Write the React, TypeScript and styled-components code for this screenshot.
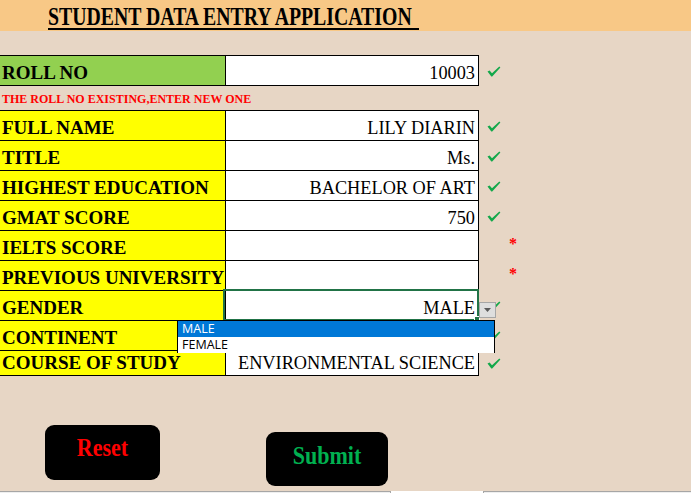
import React from 'react';
import styled, { createGlobalStyle } from 'styled-components';

const Global = createGlobalStyle`
  html, body { margin: 0; padding: 0; }
  body {
    background: #e7d6c5;
    overflow: hidden;
    font-family: "Liberation Serif", "Times New Roman", serif;
  }
`;

const Page = styled.div`
  width: 691px;
  height: 493px;
  display: flex;
  flex-direction: column;
  background: #e7d6c5;
`;

const Header = styled.header`
  flex: none;
  height: 31px;
  box-sizing: border-box;
  padding: 8px 0 0 48px;
  background: #f8c886;
`;

const TitleWrap = styled.h1`
  margin: 0;
  display: inline-block;
  border-bottom: 2px solid #000;
  padding-right: 7px;
`;

const TitleText = styled.span`
  display: block;
  font-size: 19.8px;
  line-height: 20px;
  font-weight: bold;
  color: #000;
  transform: scaleY(1.3);
  transform-origin: 50% 16.8px;
`;

const Sheet = styled.div`
  margin-top: 24px;
  display: flex;
  flex-direction: column;
`;

const Row = styled.div<{ $h: number }>`
  display: grid;
  grid-template-columns: 226px 253px 1fr;
  height: ${(p) => p.$h}px;
  box-sizing: border-box;
`;

const LabelCell = styled.div<{ $bg: string; $top?: boolean }>`
  background: ${(p) => p.$bg};
  border-right: 1px solid #000;
  border-bottom: 1px solid #000;
  border-top: ${(p) => (p.$top ? '1px solid #000' : 'none')};
  display: flex;
  align-items: flex-end;
  padding: 0 0 2px 2px;
  font-size: 19px;
  line-height: 20px;
  font-weight: bold;
  color: #000;
  white-space: nowrap;
  overflow: hidden;
`;

const ValueCell = styled.div<{ $top?: boolean; $selected?: boolean }>`
  position: relative;
  background: #fff;
  border-right: 1px solid #000;
  border-bottom: 1px solid #000;
  border-top: ${(p) => (p.$top ? '1px solid #000' : 'none')};
  display: flex;
  align-items: flex-end;
  justify-content: flex-end;
  padding: 0 3px 2px 0;
  font-size: 18.3px;
  line-height: 20px;
  color: #000;
  white-space: nowrap;
  ${(p) =>
    p.$selected
      ? `
    &::after {
      content: '';
      position: absolute;
      left: -3px;
      right: -1px;
      top: -2px;
      bottom: -1px;
      border: 2px solid #217346;
      pointer-events: none;
    }
  `
      : ''}
`;

const StatusCell = styled.div<{ $top?: boolean }>`
  display: flex;
  align-items: center;
  padding-left: 8px;
  padding-top: ${(p) => (p.$top ? '2px' : '0')};
`;

const Asterisk = styled.span`
  align-self: flex-start;
  margin: 5px 0 0 22px;
  font-size: 16px;
  line-height: 16px;
  font-weight: bold;
  color: #ff0000;
`;

const ErrorLine = styled.div`
  height: 24px;
  display: flex;
  align-items: flex-end;
  padding: 0 0 4px 2px;
  box-sizing: border-box;
  font-size: 12px;
  line-height: 14px;
  font-weight: bold;
  color: #ff0000;
`;

const FillHandle = styled.span`
  position: absolute;
  right: -2px;
  bottom: -2px;
  width: 4px;
  height: 4px;
  background: #217346;
  border: 1px solid #fff;
  z-index: 2;
`;

const DropButton = styled.span`
  position: absolute;
  left: 253px;
  top: 11px;
  width: 17px;
  height: 16px;
  box-sizing: border-box;
  background: #dedede;
  border: 1px solid #a6a6a6;
  display: flex;
  align-items: center;
  justify-content: center;
  z-index: 3;
`;

const DropList = styled.ul`
  position: absolute;
  left: -49px;
  top: 29px;
  width: 318px;
  height: 33px;
  box-sizing: border-box;
  margin: 0;
  padding: 0;
  list-style: none;
  background: #fff;
  border: 1px solid #000;
  z-index: 4;
  text-align: left;
`;

const DropItem = styled.li<{ $active?: boolean }>`
  height: 16px;
  padding-left: 4px;
  background: ${(p) => (p.$active ? '#0078d7' : '#fff')};
  color: ${(p) => (p.$active ? '#fff' : '#000')};
  font-family: "Open Sans", "Noto Sans", sans-serif;
  font-size: 12.5px;
  line-height: 16px;
`;

const ButtonRow = styled.div`
  display: flex;
  align-items: flex-start;
  padding-left: 45px;
  margin-top: 49px;
  gap: 106px;
`;

const ActionButton = styled.button<{ $color: string; $w: number; $h: number; $offset: number; $lift: number }>`
  width: ${(p) => p.$w}px;
  height: ${(p) => p.$h}px;
  margin-top: ${(p) => p.$offset}px;
  background: #000;
  border: none;
  border-radius: 9px;
  color: ${(p) => p.$color};
  font-family: "Liberation Serif", "Times New Roman", serif;
  font-size: 22px;
  font-weight: bold;
  padding: 0 0 ${(p) => p.$lift}px 0;
  display: flex;
  align-items: center;
  justify-content: center;
  cursor: pointer;
  span {
    display: inline-block;
    transform: scaleY(1.15);
  }
`;

const Footer = styled.div`
  margin-top: auto;
  height: 2px;
  display: grid;
  grid-template-columns: 390px 94px 1fr;
`;

const FooterPart = styled.div<{ $tab?: boolean }>`
  border-top: ${(p) => (p.$tab ? 'none' : '1px solid #a6a6a6')};
  background: ${(p) => (p.$tab ? '#ffffff' : '#efefef')};
  border-left: ${(p) => (p.$tab ? '1px solid #a6a6a6' : 'none')};
  border-right: ${(p) => (p.$tab ? '1px solid #a6a6a6' : 'none')};
`;

const Check = () => (
  <svg width="14" height="11" viewBox="0 0 14 11">
    <polygon points="0.5,5.6 2.6,4.4 5,7.3 12.3,0.4 13.4,1.6 5.2,10.6 4.3,10.6" fill="#12a84a" />
  </svg>
);

type Field = {
  label: string;
  value: string;
  status: 'ok' | 'req';
  h: number;
  top?: boolean;
  selected?: boolean;
};

const fields: Field[] = [
  { label: 'FULL NAME', value: 'LILY DIARIN', status: 'ok', h: 31, top: true },
  { label: 'TITLE', value: 'Ms.', status: 'ok', h: 30 },
  { label: 'HIGHEST EDUCATION', value: 'BACHELOR OF ART', status: 'ok', h: 30 },
  { label: 'GMAT SCORE', value: '750', status: 'ok', h: 30 },
  { label: 'IELTS SCORE', value: '', status: 'req', h: 30 },
  { label: 'PREVIOUS UNIVERSITY', value: '', status: 'req', h: 30 },
  { label: 'GENDER', value: 'MALE', status: 'ok', h: 30, selected: true },
  { label: 'CONTINENT', value: '', status: 'ok', h: 30 },
  { label: 'COURSE OF STUDY', value: 'ENVIRONMENTAL SCIENCE', status: 'ok', h: 25 },
];

export default function App() {
  return (
    <Page>
      <Global />
      <Header>
        <TitleWrap>
          <TitleText>STUDENT DATA ENTRY APPLICATION</TitleText>
        </TitleWrap>
      </Header>
      <Sheet>
        <Row $h={31}>
          <LabelCell $bg="#92d050" $top>ROLL NO</LabelCell>
          <ValueCell $top>10003</ValueCell>
          <StatusCell $top>
            <Check />
          </StatusCell>
        </Row>
        <ErrorLine>THE ROLL NO EXISTING,ENTER NEW ONE</ErrorLine>
        {fields.map((f) => (
          <Row key={f.label} $h={f.h}>
            <LabelCell $bg="#ffff00" $top={f.top}>{f.label}</LabelCell>
            <ValueCell $top={f.top} $selected={f.selected}>
              {f.value}
              {f.selected && (
                <>
                  <FillHandle />
                  <DropButton>
                    <svg width="7" height="4" viewBox="0 0 7 4">
                      <polygon points="0,0 7,0 3.5,4" fill="#5a5a5a" />
                    </svg>
                  </DropButton>
                  <DropList>
                    <DropItem $active>MALE</DropItem>
                    <DropItem>FEMALE</DropItem>
                  </DropList>
                </>
              )}
            </ValueCell>
            <StatusCell $top={f.top}>
              {f.status === 'ok' ? <Check /> : <Asterisk>*</Asterisk>}
            </StatusCell>
          </Row>
        ))}
      </Sheet>
      <ButtonRow>
        <ActionButton $color="#ff0000" $w={115} $h={55} $offset={0} $lift={9}>
          <span>Reset</span>
        </ActionButton>
        <ActionButton $color="#00b050" $w={122} $h={54} $offset={7} $lift={6}>
          <span>Submit</span>
        </ActionButton>
      </ButtonRow>
      <Footer>
        <FooterPart />
        <FooterPart $tab />
        <FooterPart />
      </Footer>
    </Page>
  );
}
